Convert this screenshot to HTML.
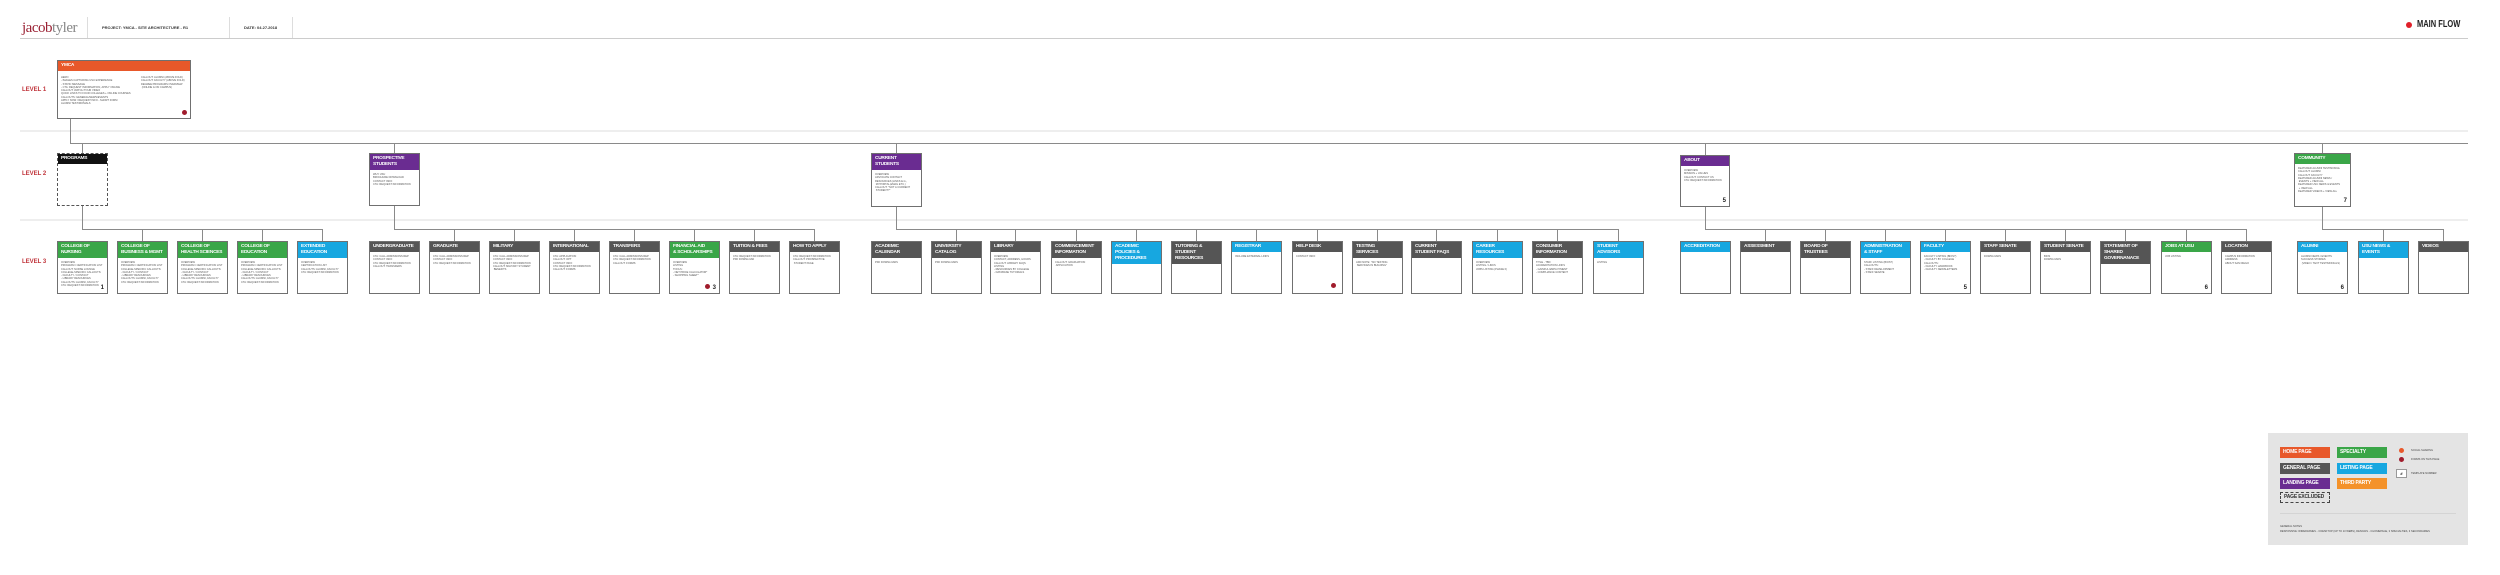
<!DOCTYPE html>
<html><head><meta charset="utf-8"><style>
*{margin:0;padding:0;box-sizing:border-box}
body{width:2500px;height:575px;background:#fff;position:relative;overflow:hidden;font-family:"Liberation Sans",sans-serif}
.a{position:absolute}
.l{position:absolute;background:#8a8a8a}
.b{position:absolute;width:51px;height:53px;border:1px solid #707070;background:#fff;overflow:hidden}
.h{color:#fff;font:bold 4.8px/6px "Liberation Sans",sans-serif;padding:2px 1px 2px 3px;letter-spacing:-0.25px;white-space:nowrap}
.t{font:2.6px/3.3px "Liberation Sans",sans-serif;color:#555;padding:3px 3px;white-space:nowrap}
.G{background:#3aa648}.B{background:#17a7e0}.D{background:#555}.P{background:#6a2c91}.O{background:#e8582a}.K{background:#111}
.lv{position:absolute;left:22px;color:#c0343b;font:bold 6px "Liberation Sans",sans-serif}
.n{position:absolute;right:3px;bottom:2px;font:bold 6px "Liberation Sans";color:#222}
.dot{position:absolute;width:5px;height:5px;border-radius:50%;background:#a01c2c}
.chip{position:absolute;width:50px;height:11px;color:#fff;font:bold 5px/11px "Liberation Sans";padding-left:3px;white-space:nowrap;letter-spacing:-0.2px}
.sm{position:absolute;font:2.6px "Liberation Sans";color:#444;white-space:nowrap}
</style></head><body>
<div class="a" style="left:22px;top:20px;font:15px 'Liberation Serif',serif;color:#9b2335;letter-spacing:-0.5px">jacob<span style="color:#888">tyler</span></div>
<div class="a" style="left:87px;top:17px;width:1px;height:21px;background:#ddd"></div>
<div class="a" style="left:229px;top:17px;width:1px;height:21px;background:#ddd"></div>
<div class="a" style="left:292px;top:17px;width:1px;height:21px;background:#ddd"></div>
<div class="a" style="left:102px;top:25px;font:bold 4px 'Liberation Sans';color:#333">PROJECT: YMCA - SITE ARCHITECTURE - R1</div>
<div class="a" style="left:244px;top:25px;font:bold 4px 'Liberation Sans';color:#333">DATE: 04.27.2018</div>
<div class="a" style="left:20px;top:38px;width:2448px;height:1px;background:#ccc"></div>
<div class="a" style="left:2406px;top:22px;width:6px;height:6px;border-radius:50%;background:#e0202a"></div>
<div class="a" style="left:2417px;top:19px;font:bold 10px 'Liberation Sans';color:#222;transform:scaleX(0.75);transform-origin:left;white-space:nowrap">MAIN FLOW</div>
<div class="a" style="left:20px;top:130px;width:2448px;height:2px;background:#eee"></div>
<div class="a" style="left:20px;top:219px;width:2448px;height:2px;background:#eee"></div>
<div class="lv" style="top:87px">LEVEL 1</div>
<div class="lv" style="top:171px">LEVEL 2</div>
<div class="lv" style="top:259px">LEVEL 3</div>
<div class="b" style="left:57px;top:60px;width:134px;height:59px"><div class="h O">YMCA</div>
<div class="t" style="position:absolute;top:12px;left:0;width:80px">HERO<br>- IMAGES CAPTURING USU EXPERIENCE<br>- STATIC MESSAGE<br>- CTA: REQUEST INFORMATION, APPLY ONLINE<br>CALLOUT: WATCH TOUR VIDEO<br>QUICK LINKS TO FOUR COLLEGES + ONLINE COURSES<br>CALLOUTS: GENERAL/NEWS/EVENTS<br>APPLY NOW / REQUEST INFO - SHORT FORM<br>ALUMNI TESTIMONIALS</div>
<div class="t" style="position:absolute;top:12px;left:80px;width:54px">CALLOUT: ALUMNI (ABOVE FOLD)<br>CALLOUT: FACULTY (ABOVE FOLD)<br>DEGREE PROGRAMS OVERVIEW<br>&nbsp;(ONLINE &amp; ON CAMPUS)</div>
<div class="dot" style="right:3px;bottom:3px"></div></div>
<div class="l" style="left:70px;top:119px;width:1px;height:25px"></div>
<div class="l" style="left:70px;top:143px;width:2398px;height:1px"></div>
<div class="l" style="left:82px;top:143px;width:1px;height:10px"></div>
<div class="l" style="left:394px;top:143px;width:1px;height:10px"></div>
<div class="l" style="left:896px;top:143px;width:1px;height:12px"></div>
<div class="l" style="left:1705px;top:143px;width:1px;height:12px"></div>
<div class="l" style="left:2322px;top:143px;width:1px;height:10px"></div>
<div class="b" style="left:57px;top:153px;height:53px;border:1px dashed #555"><div class="h K">PROGRAMS</div></div>
<div class="b" style="left:369px;top:153px;height:53px"><div class="h P">PROSPECTIVE<br>STUDENTS</div><div class="t">WHY USU<br>BROCHURE DOWNLOAD<br>CONTACT INFO<br>CTA: REQUEST INFORMATION</div></div>
<div class="b" style="left:871px;top:153px;height:54px"><div class="h P">CURRENT<br>STUDENTS</div><div class="t">OVERVIEW<br>ADVOCATE CONTACT<br>RESOURCES (LINKS E.G.,<br>&nbsp;MYPORTAL,EMAIL ETC.)<br>CALLOUT: "NOT A CURRENT<br>&nbsp;STUDENT?"</div></div>
<div class="b" style="left:1680px;top:155px;width:50px;height:52px"><div class="h P">ABOUT</div><div class="t">OVERVIEW<br>MISSION + VALUES<br>CALLOUT: CONTACT US<br>CTA: REQUEST INFORMATION</div><div class="n">5</div></div>
<div class="b" style="left:2294px;top:153px;width:57px;height:54px"><div class="h G">COMMUNITY</div><div class="t">FEATURED ALUMNI TESTIMONIAL<br>CALLOUT: ALUMNI<br>CALLOUT: FACULTY<br>FEATURED ALUMNI NEWS /<br>&nbsp;EVENTS + VIEW ALL<br>FEATURED USU NEWS &amp; EVENTS<br>&nbsp;+ VIEW ALL<br>FEATURED VIDEOS + VIEW ALL</div><div class="n">7</div></div>
<div class="l" style="left:82px;top:206px;width:1px;height:23px"></div>
<div class="l" style="left:82px;top:229px;width:240px;height:1px"></div>
<div class="l" style="left:394px;top:206px;width:1px;height:23px"></div>
<div class="l" style="left:394px;top:229px;width:420px;height:1px"></div>
<div class="l" style="left:896px;top:207px;width:1px;height:22px"></div>
<div class="l" style="left:896px;top:229px;width:722px;height:1px"></div>
<div class="l" style="left:1705px;top:207px;width:1px;height:22px"></div>
<div class="l" style="left:1705px;top:229px;width:541px;height:1px"></div>
<div class="l" style="left:2322px;top:207px;width:1px;height:22px"></div>
<div class="l" style="left:2322px;top:229px;width:121px;height:1px"></div>
<div class="l" style="left:142px;top:229px;width:1px;height:12px"></div><div class="l" style="left:202px;top:229px;width:1px;height:12px"></div><div class="l" style="left:262px;top:229px;width:1px;height:12px"></div><div class="l" style="left:322px;top:229px;width:1px;height:12px"></div>
<div class="l" style="left:454px;top:229px;width:1px;height:12px"></div><div class="l" style="left:514px;top:229px;width:1px;height:12px"></div><div class="l" style="left:574px;top:229px;width:1px;height:12px"></div><div class="l" style="left:634px;top:229px;width:1px;height:12px"></div><div class="l" style="left:694px;top:229px;width:1px;height:12px"></div><div class="l" style="left:754px;top:229px;width:1px;height:12px"></div><div class="l" style="left:814px;top:229px;width:1px;height:12px"></div>
<div class="l" style="left:956px;top:229px;width:1px;height:12px"></div><div class="l" style="left:1015px;top:229px;width:1px;height:12px"></div><div class="l" style="left:1076px;top:229px;width:1px;height:12px"></div><div class="l" style="left:1136px;top:229px;width:1px;height:12px"></div><div class="l" style="left:1196px;top:229px;width:1px;height:12px"></div><div class="l" style="left:1256px;top:229px;width:1px;height:12px"></div><div class="l" style="left:1317px;top:229px;width:1px;height:12px"></div><div class="l" style="left:1377px;top:229px;width:1px;height:12px"></div><div class="l" style="left:1436px;top:229px;width:1px;height:12px"></div><div class="l" style="left:1497px;top:229px;width:1px;height:12px"></div><div class="l" style="left:1557px;top:229px;width:1px;height:12px"></div><div class="l" style="left:1618px;top:229px;width:1px;height:12px"></div>
<div class="l" style="left:1765px;top:229px;width:1px;height:12px"></div><div class="l" style="left:1825px;top:229px;width:1px;height:12px"></div><div class="l" style="left:1885px;top:229px;width:1px;height:12px"></div><div class="l" style="left:1945px;top:229px;width:1px;height:12px"></div><div class="l" style="left:2005px;top:229px;width:1px;height:12px"></div><div class="l" style="left:2065px;top:229px;width:1px;height:12px"></div><div class="l" style="left:2125px;top:229px;width:1px;height:12px"></div><div class="l" style="left:2186px;top:229px;width:1px;height:12px"></div><div class="l" style="left:2246px;top:229px;width:1px;height:12px"></div>
<div class="l" style="left:2383px;top:229px;width:1px;height:12px"></div><div class="l" style="left:2443px;top:229px;width:1px;height:12px"></div>
<div class="b" style="left:57px;top:241px"><div class="h G">COLLEGE OF<br>NURSING</div><div class="t">OVERVIEW<br>PROGRAM / CERTIFICATION LIST<br>CALLOUT: NURSE LOUNGE<br>COLLEGE-SPECIFIC CALLOUTS:<br>- FACULTY / CONTACT<br>- LIBRARY RESOURCES<br>CALLOUTS: ALUMNI, FACULTY<br>CTA: REQUEST INFORMATION</div><div class="n">1</div></div>
<div class="b" style="left:117px;top:241px"><div class="h G">COLLEGE OF<br>BUSINESS &amp; MGMT</div><div class="t">OVERVIEW<br>PROGRAM / CERTIFICATION LIST<br>COLLEGE-SPECIFIC CALLOUTS:<br>- FACULTY / CONTACT<br>- LIBRARY RESOURCES<br>CALLOUTS: ALUMNI, FACULTY<br>CTA: REQUEST INFORMATION</div></div>
<div class="b" style="left:177px;top:241px"><div class="h G">COLLEGE OF<br>HEALTH SCIENCES</div><div class="t">OVERVIEW<br>PROGRAM / CERTIFICATION LIST<br>COLLEGE-SPECIFIC CALLOUTS:<br>- FACULTY / CONTACT<br>- LIBRARY RESOURCES<br>CALLOUTS: ALUMNI, FACULTY<br>CTA: REQUEST INFORMATION</div></div>
<div class="b" style="left:237px;top:241px"><div class="h G">COLLEGE OF<br>EDUCATION</div><div class="t">OVERVIEW<br>PROGRAM / CERTIFICATION LIST<br>COLLEGE-SPECIFIC CALLOUTS:<br>- FACULTY / CONTACT<br>- LIBRARY RESOURCES<br>CALLOUTS: ALUMNI, FACULTY<br>CTA: REQUEST INFORMATION</div></div>
<div class="b" style="left:297px;top:241px"><div class="h B">EXTENDED<br>EDUCATION</div><div class="t">OVERVIEW<br>CERTIFICATION LIST<br>CALLOUTS: ALUMNI, FACULTY<br>CTA: REQUEST INFORMATION</div></div>
<div class="b" style="left:369px;top:241px"><div class="h D">UNDERGRADUATE</div><div class="t">CTA: CALL ADMISSIONS REP<br>CONTACT INFO<br>CTA: REQUEST INFORMATION<br>CALLOUT: TRANSFERS</div></div>
<div class="b" style="left:429px;top:241px"><div class="h D">GRADUATE</div><div class="t">CTA: CALL ADMISSIONS REP<br>CONTACT INFO<br>CTA: REQUEST INFORMATION</div></div>
<div class="b" style="left:489px;top:241px"><div class="h D">MILITARY</div><div class="t">CTA: CALL ADMISSIONS REP<br>CONTACT INFO<br>CTA: REQUEST INFORMATION<br>CALLOUT: MILITARY STUDENT<br>&nbsp;BENEFITS</div></div>
<div class="b" style="left:549px;top:241px"><div class="h D">INTERNATIONAL</div><div class="t">CTA: APPLICATION<br>CALLOUT: OPT<br>CONTACT INFO<br>CTA: REQUEST INFORMATION<br>CALLOUT: FORMS</div></div>
<div class="b" style="left:609px;top:241px"><div class="h D">TRANSFERS</div><div class="t">CTA: CALL ADMISSIONS REP<br>CTA: REQUEST INFORMATION<br>CALLOUT: FORMS</div></div>
<div class="b" style="left:669px;top:241px"><div class="h G">FINANCIAL AID<br>&amp; SCHOLARSHIPS</div><div class="t">OVERVIEW<br>LISTING<br>TOOLS:<br>- NET PRICE CALCULATOR*<br>- SHOPPING SHEET*</div><div class="dot" style="right:9px;bottom:4px"></div><div class="n">3</div></div>
<div class="b" style="left:729px;top:241px"><div class="h D">TUITION &amp; FEES</div><div class="t">CTA: REQUEST INFORMATION<br>PDF DOWNLOAD</div></div>
<div class="b" style="left:789px;top:241px"><div class="h D">HOW TO APPLY</div><div class="t">CTA: REQUEST INFORMATION<br>CALLOUT: PROSPECTIVE<br>&nbsp;STUDENT PAGE</div></div>
<div class="b" style="left:871px;top:241px"><div class="h D">ACADEMIC<br>CALENDAR</div><div class="t">PDF DOWNLOADS</div></div>
<div class="b" style="left:931px;top:241px"><div class="h D">UNIVERSITY<br>CATALOG</div><div class="t">PDF DOWNLOADS</div></div>
<div class="b" style="left:990px;top:241px"><div class="h D">LIBRARY</div><div class="t">OVERVIEW<br>CONTACT, ADDRESS, HOURS<br>CALLOUT: LIBRARY FAQS<br>LISTING<br>- RESOURCES BY COLLEGE<br>- DATABASE TUTORIALS</div></div>
<div class="b" style="left:1051px;top:241px"><div class="h D">COMMENCEMENT<br>INFORMATION</div><div class="t">CALLOUT: GRADUATION<br>&nbsp;APPLICATION</div></div>
<div class="b" style="left:1111px;top:241px"><div class="h B">ACADEMIC<br>POLICIES &amp;<br>PROCEDURES</div></div>
<div class="b" style="left:1171px;top:241px"><div class="h D">TUTORING &amp;<br>STUDENT<br>RESOURCES</div></div>
<div class="b" style="left:1231px;top:241px"><div class="h B">REGISTRAR</div><div class="t">INCLUDE EXTERNAL LINKS</div></div>
<div class="b" style="left:1292px;top:241px"><div class="h D">HELP DESK</div><div class="t">CONTACT INFO</div><div class="dot" style="right:6px;bottom:5px"></div></div>
<div class="b" style="left:1352px;top:241px"><div class="h D">TESTING<br>SERVICES</div><div class="t">ADD NOTE: "NO TESTING<br>&nbsp;SERVICES IN BUILDING"</div></div>
<div class="b" style="left:1411px;top:241px"><div class="h D">CURRENT<br>STUDENT FAQS</div></div>
<div class="b" style="left:1472px;top:241px"><div class="h B">CAREER<br>RESOURCES</div><div class="t">OVERVIEW<br>LISTING / LINKS<br>JOBS LISTING (PHASE II)</div></div>
<div class="b" style="left:1532px;top:241px"><div class="h D">CONSUMER<br>INFORMATION</div><div class="t">TITLE - TBD<br>ACCREDITATION LINKS<br>- GAINFUL EMPLOYMENT<br>- COMPLIANCE CONTENT</div></div>
<div class="b" style="left:1593px;top:241px"><div class="h B">STUDENT<br>ADVISORS</div><div class="t">LISTING</div></div>
<div class="b" style="left:1680px;top:241px"><div class="h B">ACCREDITATION</div></div>
<div class="b" style="left:1740px;top:241px"><div class="h D">ASSESSMENT</div></div>
<div class="b" style="left:1800px;top:241px"><div class="h D">BOARD OF<br>TRUSTEES</div></div>
<div class="b" style="left:1860px;top:241px"><div class="h B">ADMINISTRATION<br>&amp; STAFF</div><div class="t">STAFF LISTING (BIOS?)<br>CALLOUTS:<br>- STAFF DEVELOPMENT<br>- STAFF SENATE</div></div>
<div class="b" style="left:1920px;top:241px"><div class="h B">FACULTY</div><div class="t">FACULTY LISTING (BIOS?)<br>- FACULTY BY COLLEGE<br>CALLOUTS:<br>- FACULTY HANDBOOK<br>- FACULTY NEWSLETTERS</div><div class="n">5</div></div>
<div class="b" style="left:1980px;top:241px"><div class="h D">STAFF SENATE</div><div class="t">DOWNLOADS</div></div>
<div class="b" style="left:2040px;top:241px"><div class="h D">STUDENT SENATE</div><div class="t">BIOS<br>DOWNLOADS</div></div>
<div class="b" style="left:2100px;top:241px"><div class="h D">STATEMENT OF<br>SHARED<br>GOVERNANACE</div></div>
<div class="b" style="left:2161px;top:241px"><div class="h G">JOBS AT USU</div><div class="t">JOB LISTING</div><div class="n">6</div></div>
<div class="b" style="left:2221px;top:241px"><div class="h D">LOCATION</div><div class="t">CAMPUS INFORMATION<br>ADDRESS<br>ABOUT SAN DIEGO</div></div>
<div class="b" style="left:2297px;top:241px"><div class="h B">ALUMNI</div><div class="t">ALUMNI NEWS / EVENTS<br>SUCCESS STORIES<br>&nbsp;(VIDEO / TEXT TESTIMONIALS)</div><div class="n">6</div></div>
<div class="b" style="left:2358px;top:241px"><div class="h B">USU NEWS &amp;<br>EVENTS</div></div>
<div class="b" style="left:2418px;top:241px"><div class="h D">VIDEOS</div></div>
<div class="a" style="left:2268px;top:433px;width:200px;height:112px;background:#e4e4e4"></div>
<div class="chip O" style="left:2280px;top:447px">HOME PAGE</div>
<div class="chip G" style="left:2337px;top:447px">SPECIALTY</div>
<div class="chip D" style="left:2280px;top:463px">GENERAL PAGE</div>
<div class="chip B" style="left:2337px;top:463px">LISTING PAGE</div>
<div class="chip P" style="left:2280px;top:478px">LANDING PAGE</div>
<div class="chip" style="left:2337px;top:478px;background:#f4922a">THIRD PARTY</div>
<div class="chip" style="left:2280px;top:492px;border:1px dashed #444;color:#333;line-height:9px">PAGE EXCLUDED</div>
<div class="a" style="left:2399px;top:448px;width:5px;height:5px;border-radius:50%;background:#e8582a"></div>
<div class="a" style="left:2399px;top:457px;width:5px;height:5px;border-radius:50%;background:#a01c2c"></div>
<div class="a" style="left:2396px;top:469px;width:11px;height:9px;background:#fff;border:1px solid #999;font:bold 4px/7px 'Liberation Sans';text-align:center">#</div>
<div class="sm" style="left:2411px;top:449px">SOCIAL SHARING</div>
<div class="sm" style="left:2411px;top:458px">FORMS ON THIS PAGE</div>
<div class="sm" style="left:2411px;top:472px">TEMPLATE NUMBER</div>
<div class="a" style="left:2280px;top:513px;width:176px;height:1px;background:#d4d4d4"></div>
<div class="sm" style="left:2280px;top:525px">GENERAL NOTES</div>
<div class="sm" style="left:2280px;top:530px">RESPONSIVE: WIREFRAMES - 3 DESKTOP (UP TO 13 WEBS), DESIGNS - 3 HOMEPAGE, 3 SPECIALTIES, 3 SECONDARIES</div>
</body></html>
